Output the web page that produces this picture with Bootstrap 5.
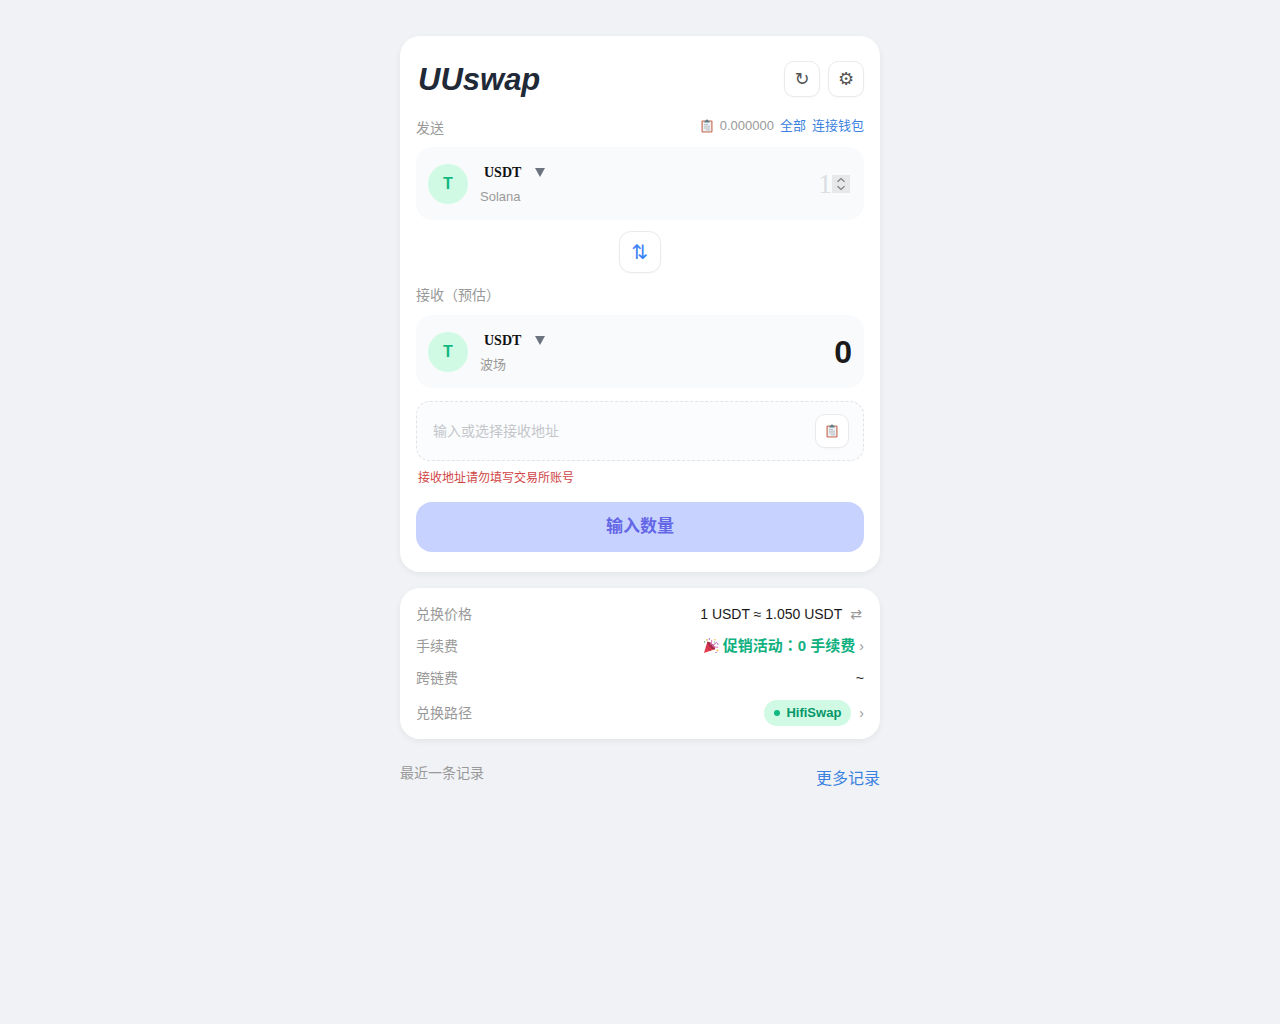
<!DOCTYPE html>
<html lang="zh-CN">
<head>
<meta charset="utf-8">
<meta name="viewport" content="width=device-width, initial-scale=1">
<title>UUswap</title>
<link href="https://cdn.jsdelivr.net/npm/bootstrap@5.3.0/dist/css/bootstrap.min.css" rel="stylesheet">
<style>
  body { background: #f0f2f6; color: #1a1a1a; font-family: "Liberation Sans", "Noto Sans CJK SC", sans-serif; font-size: 14px; line-height: 20px; }
  .shell { max-width: 480px; padding-top: 36px; }
  .panel { background: #fff; border-radius: 20px; box-shadow: 0 2px 6px rgba(0,0,0,.06); }
  .swap-panel { padding: 20px 16px; }
  .info-panel { padding: 16px 16px 13px; }
  .brand { font-size: 31px; line-height: 44px; padding-top: 2px; font-weight: 700; font-style: italic; color: #1f2937; margin: 0 2px; }
  .sq { padding: 0; background: #fff; border: 1px solid #e8eaee; border-radius: 10px; color: #555; display: flex; align-items: center; justify-content: center; font-family: "DejaVu Sans", sans-serif; box-shadow: 0 1px 2px rgba(0,0,0,.03); }
  .sq-tool { width: 36px; height: 36px; font-size: 18px; }
  .sq-swap { width: 42px; height: 42px; font-size: 20px; border-radius: 12px; color: #3b82f6; }
  .sq-paste { width: 34px; height: 34px; }
  .muted { color: #999; }
  .cap { font-size: 13px; }
  .gap-6 { gap: 6px; }
  .send-head { padding: 14px 0 9px; }
  .send-head .cap { padding-bottom: 2px; }
  .swap-row { padding: 11px 0 12px; }
  .recv-head { padding-bottom: 10px; }
  .blue { color: #3b82e0; text-decoration: none; }
  .token-box { background: #f9fafb; border-radius: 16px; padding: 12px; min-height: 73px; }
  .token-box .cap { padding-top: 2px; }
  .coin { width: 40px; height: 40px; border-radius: 50%; background: #d1fae5; color: #10b981; font-size: 16px; font-weight: 700; }
  .pick { border: 0; background: none; padding: 0 4px; display: flex; gap: 14px; align-items: center; color: #111; font: 700 14px/24px "Liberation Serif", serif; }
  .caret { width: 10px; height: 9px; fill: #6b7280; }
  .amount { width: 120px; border: 0; background: none; padding: 0 2px 0 0; text-align: right; font: 28px/34px "Liberation Serif", serif; outline: 0; }
  .amount::placeholder { color: #dcdfe3; opacity: 1; }
  .amount::-webkit-inner-spin-button { -webkit-appearance: none; opacity: 1; width: 18px; height: 18px; align-self: center; background: #e6e8ea url("data:image/svg+xml,%3Csvg xmlns='http://www.w3.org/2000/svg' viewBox='0 0 18 18' fill='none' stroke='%23808386' stroke-width='1.4'%3E%3Cpath d='M5.5 6.8 9 3.6l3.5 3.2M5.5 11.2 9 14.4l3.5-3.2'/%3E%3C/svg%3E") center / 18px no-repeat; }
  .result { font-size: 32px; line-height: 40px; font-weight: 700; }
  .addr { border: 1px dashed #e0e3e8; border-radius: 14px; background: #fbfcfe; height: 60px; padding: 0 14px 0 16px; margin-top: 13px; }
  .addr input { border: 0; background: none; outline: 0; padding: 0; font-size: 14px; min-width: 0; }
  .addr input::placeholder { color: #c4c6ca; opacity: 1; }
  .note { font-size: 12px; line-height: 18px; color: #cf4545; padding: 8px 2px 15px; }
  .go { height: 50px; border: 0; border-radius: 16px; background: #c7d2fe; color: #6366e6; font-size: 17px; font-weight: 700; }
  .promo { color: #10b07f; font-size: 15px; line-height: 20px; font-weight: 700; border: 0; background: none; padding: 0; }
  .colon { font-family: "Noto Sans CJK TC", sans-serif; line-height: 1; }
  .sym { font-family: "DejaVu Sans", sans-serif; border: 0; background: none; padding: 0 2px; color: #999; }
  .route { background: #d1fae5; color: #059669; font-size: 13px; font-weight: 700; border-radius: 13px; height: 26px; padding: 0 10px; }
  .dot { width: 6px; height: 6px; border-radius: 50%; background: #10b981; }
  .more { font-size: 16px; line-height: 24px; }
</style>
<script src="https://cdn.jsdelivr.net/npm/bootstrap@5.3.0/dist/js/bootstrap.bundle.min.js"></script>
</head>
<body>
<svg class="d-none" aria-hidden="true">
  <symbol id="clip" viewBox="0 0 14 14">
    <rect x="1.5" y="1.5" width="11" height="12" rx="1" fill="#c9705a"/>
    <rect x="2.7" y="2.6" width="8.6" height="9.8" fill="#eef1f4"/>
    <path d="M4.5 3.4V1.8h1.3a1.2 1.2 0 0 1 2.4 0h1.3v1.6z" fill="#5f7d86"/>
    <path d="M4 5.4h4M4 7.2h6M4 9h6M6 10.8h4" stroke="#a9b2bb" stroke-width=".8"/>
  </symbol>
  <symbol id="party" viewBox="0 0 16 16">
    <path d="M1 15 4.4 3.6 12.4 11z" fill="#e23b4e"/>
    <path d="m3.4 8.4 4.6 4.4" stroke="#b52c4c" stroke-width="1"/>
    <ellipse cx="8.2" cy="7.6" rx="2" ry="5" transform="rotate(-45 8.2 7.6)" fill="#a82a48"/>
    <path d="M8 7c-.4-2 1.4-2.6.6-5M9.2 8c1-2 2.8-1 4.6-4M10 9c1.6-1 2.8.8 5 0" fill="none" stroke="#d879b8" stroke-width="1.1"/>
    <g fill="#f5b83d"><circle cx="4" cy="1.8" r=".9"/><circle cx="12" cy="1.8" r=".8"/><circle cx="14.4" cy="12.4" r=".9"/></g>
    <g fill="#8b5bd6"><circle cx="6.4" cy="1" r=".8"/><circle cx="14.8" cy="6" r=".8"/><circle cx="13" cy="14.4" r=".7"/></g>
    <g fill="#49b36b"><circle cx="1.6" cy="4" r=".8"/><circle cx="11.4" cy="4" r=".6"/></g>
  </symbol>
</svg>
<main class="container-fluid shell px-0">
  <section class="panel swap-panel mb-3">
    <header class="d-flex justify-content-between align-items-center">
      <h1 class="brand">UUswap</h1>
      <div class="d-flex gap-2">
        <button class="sq sq-tool" type="button" aria-label="刷新">↻</button>
        <button class="sq sq-tool" type="button" aria-label="设置">⚙</button>
      </div>
    </header>
    <div class="send-head d-flex justify-content-between align-items-end">
      <label class="muted" for="amt">发送</label>
      <div class="cap muted d-flex align-items-center gap-6">
        <svg width="14" height="14" aria-hidden="true"><use href="#clip"/></svg>
        <span>0.000000</span>
        <a class="blue" href="#">全部</a>
        <a class="blue" href="#">连接钱包</a>
      </div>
    </div>
    <div class="token-box d-flex align-items-center">
      <span class="coin d-flex align-items-center justify-content-center me-2">T</span>
      <div class="flex-grow-1 ps-1">
        <button class="pick" type="button">USDT <svg class="caret" viewBox="0 0 10 9"><path d="M0 0h10L5 9z"/></svg></button>
        <div class="cap muted">Solana</div>
      </div>
      <input class="amount" id="amt" type="number" placeholder="1">
    </div>
    <div class="swap-row d-flex justify-content-center">
      <button class="sq sq-swap" type="button" aria-label="交换">⇅</button>
    </div>
    <div class="recv-head muted">接收（预估）</div>
    <div class="token-box d-flex align-items-center">
      <span class="coin d-flex align-items-center justify-content-center me-2">T</span>
      <div class="flex-grow-1 ps-1">
        <button class="pick" type="button">USDT <svg class="caret" viewBox="0 0 10 9"><path d="M0 0h10L5 9z"/></svg></button>
        <div class="cap muted">波场</div>
      </div>
      <output class="result">0</output>
    </div>
    <div class="addr d-flex align-items-center">
      <input class="flex-grow-1" type="text" placeholder="输入或选择接收地址" aria-label="接收地址">
      <button class="sq sq-paste" type="button" aria-label="粘贴"><svg width="14" height="14"><use href="#clip"/></svg></button>
    </div>
    <div class="note">接收地址请勿填写交易所账号</div>
    <button class="go w-100 d-block" type="button">输入数量</button>
  </section>

  <section class="panel info-panel d-flex flex-column">
    <div class="d-flex justify-content-between pb-2 mb-1">
      <span class="muted">兑换价格</span>
      <span class="d-flex gap-6">1 USDT ≈ 1.050 USDT <button class="sym" type="button" aria-label="反转价格">⇄</button></span>
    </div>
    <div class="d-flex justify-content-between pb-2 mb-1">
      <span class="muted">手续费</span>
      <span class="d-flex align-items-center gap-1"><svg width="16" height="16" aria-hidden="true"><use href="#party"/></svg><button class="promo" type="button">促销活动<span class="colon" lang="zh-TW">：</span>0 手续费</button><span class="muted">›</span></span>
    </div>
    <div class="d-flex justify-content-between pb-2 mb-1">
      <span class="muted">跨链费</span>
      <span>~</span>
    </div>
    <div class="d-flex justify-content-between align-items-center">
      <span class="muted">兑换路径</span>
      <span class="d-flex align-items-center gap-2"><span class="route d-flex align-items-center gap-6"><i class="dot"></i>HifiSwap</span><span class="muted">›</span></span>
    </div>
  </section>

  <footer class="d-flex justify-content-between align-items-start pt-4">
    <span class="muted">最近一条记录</span>
    <a class="blue more pt-1" href="#">更多记录</a>
  </footer>
</main>
</body>
</html>
